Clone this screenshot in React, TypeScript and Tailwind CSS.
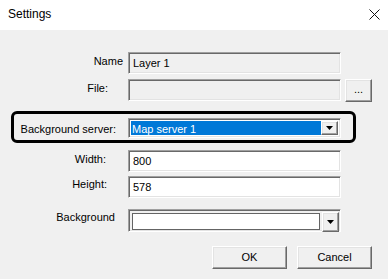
import React from 'react';

const font = { fontFamily: '"Liberation Sans", Arial, sans-serif' };

const sunken =
  'border border-t-[#a0a0a0] border-l-[#a0a0a0] border-b-white border-r-white shadow-[inset_1px_1px_0_#696969,inset_-1px_-1px_0_#e3e3e3]';
const raised =
  'border border-t-white border-l-white border-b-[#696969] border-r-[#696969] shadow-[inset_-1px_-1px_0_#a0a0a0,inset_1px_1px_0_#e3e3e3] bg-[#f0f0f0]';

const Arrow = () => (
  <svg width="7" height="4" viewBox="0 0 7 4">
    <path d="M0 0h7L3.5 4z" fill="#000" />
  </svg>
);

const Label: React.FC<{ text: string; pr: string; pt: string }> = ({ text, pr, pt }) => (
  <div className={`w-[120px] shrink-0 text-right whitespace-nowrap ${pr} ${pt}`}>{text}</div>
);

const App: React.FC = () => {
  return (
    <div className="w-[388px] h-[279px] bg-[#f0f0f0] text-[11px] leading-[13px] text-black overflow-hidden" style={font}>
      {/* title bar */}
      <div className="h-[30px] bg-white flex items-center justify-between pl-[8px] pr-[8px]">
        <span className="text-[12px] pb-[2px]">Settings</span>
        <svg width="11" height="11" viewBox="0 0 11 11" className="mb-[1px]">
          <path d="M0.5 0.5l10 10M10.5 0.5l-10 10" stroke="#111" strokeWidth="1" />
        </svg>
      </div>

      <div className="flex flex-col pt-[22px]">
        {/* Name */}
        <div className="flex items-start h-[22px]">
          <div className="w-[120px] shrink-0 pt-[3px] flex justify-end">
            <span className="whitespace-nowrap -mr-[3px]">Name</span>
          </div>
          <div className={`ml-[8px] w-[213px] h-[22px] ${sunken} bg-[#f0f0f0] pl-[4px] pt-[4px]`}>Layer 1</div>
        </div>

        {/* File */}
        <div className="flex items-start h-[23px] mt-[5px]">
          <Label text="File:" pr="pr-[12px]" pt="pt-[3px]" />
          <div className={`ml-[8px] w-[213px] h-[22px] ${sunken} bg-[#f0f0f0]`} />
          <button className={`ml-[4px] w-[27px] h-[23px] ${raised} flex items-center justify-center pb-[2px] text-[11px]`}>...</button>
        </div>

        {/* Background server */}
        <div className="mt-[9px] ml-[11px] w-[345px] h-[32px] border-[3px] border-black rounded-[6px] flex items-start">
          <div className="w-[106px] shrink-0 text-right pr-[4px] pt-[9px] whitespace-nowrap">Background server:</div>
          <div className={`ml-[8px] mt-[4px] w-[213px] h-[20px] ${sunken} bg-white flex items-stretch p-[2px]`}>
            <div className="flex-1 bg-[#0078d7] text-white pl-[1px] pt-[2px]">Map server 1</div>
            <div className={`w-[17px] ${raised} flex items-center justify-center`}>
              <Arrow />
            </div>
          </div>
        </div>

        {/* Width */}
        <div className="flex items-start h-[22px] mt-[7px]">
          <Label text="Width:" pr="pr-[14px]" pt="pt-[3px]" />
          <div className={`ml-[8px] w-[213px] h-[22px] ${sunken} bg-white pl-[4px] pt-[4px]`}>800</div>
        </div>

        {/* Height */}
        <div className="flex items-start h-[22px] mt-[4px]">
          <Label text="Height:" pr="pr-[13px]" pt="pt-[2px]" />
          <div className={`ml-[8px] w-[213px] h-[22px] ${sunken} bg-white pl-[4px] pt-[4px]`}>578</div>
        </div>

        {/* Background */}
        <div className="flex items-start h-[23px] mt-[11px]">
          <Label text="Background" pr="pr-[5px]" pt="pt-[2px]" />
          <div className={`ml-[8px] w-[213px] h-[23px] ${sunken} bg-[#f0f0f0] flex items-stretch pl-[3px] pt-[3px] pb-[2px] pr-[1px]`}>
            <div className="w-[190px] h-[17px] bg-white border border-[#646464]" />
            <div className={`ml-[2px] w-[17px] h-[20px] -mt-[1px] ${raised} flex items-center justify-center`}>
              <Arrow />
            </div>
          </div>
        </div>

        {/* Buttons */}
        <div className="flex justify-end gap-[10px] mt-[14px] pr-[16px]">
          <button className={`w-[75px] h-[23px] ${raised} text-[11px]`}>OK</button>
          <button className={`w-[75px] h-[23px] ${raised} text-[11px]`}>Cancel</button>
        </div>
      </div>
    </div>
  );
};

export default App;
